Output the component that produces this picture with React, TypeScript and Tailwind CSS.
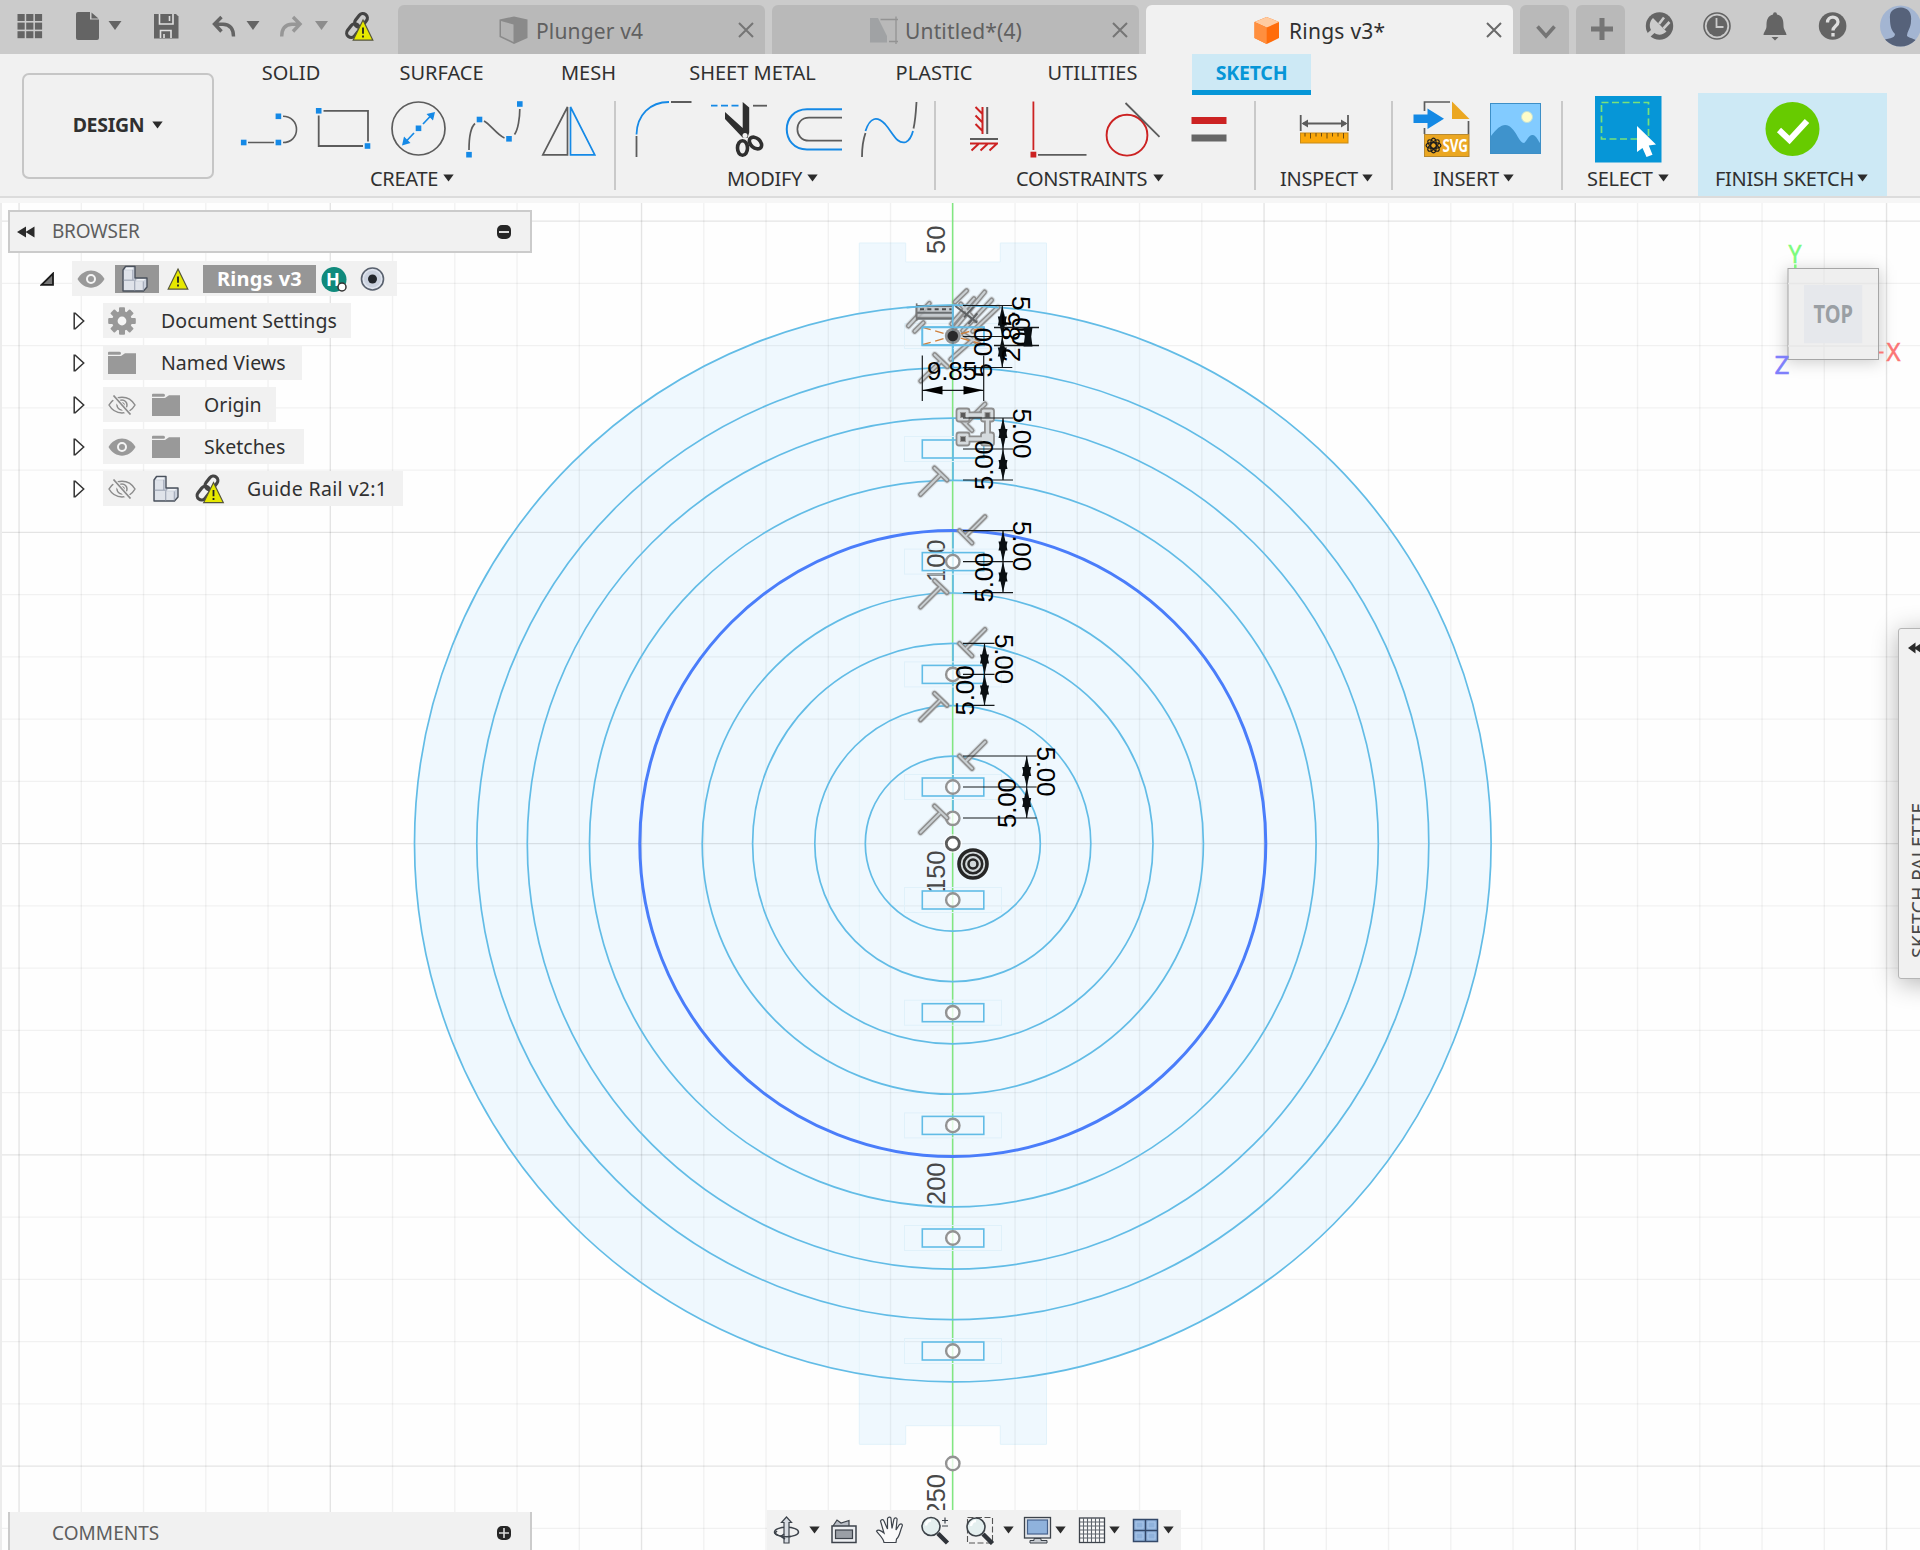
import React from "react";

const G = "#5c5c5c";
const B = "#1589e6";
const R = "#cc2222";

/* Icon drawn in toolbar coordinates: x/y locate the view box, ml spaces it from its neighbour. */
function Ico({ x, y, w, h, ml = 0, children }: { x: number; y: number; w: number; h: number; ml?: number; children?: React.ReactNode }) {
  return (
    <svg className="shrink-0 block" style={{ marginLeft: ml }} width={w} height={h} viewBox={`${x} ${y} ${w} ${h}`} fill="none">
      {children}
    </svg>
  );
}

const Sq = ({ x, y }: { x: number; y: number }) => <rect x={x - 2.8} y={y - 2.8} width={5.6} height={5.6} fill={B} />;

function Caret({ className = "" }: { className?: string }) {
  return (
    <svg className={"shrink-0 " + className} width="11" height="8" viewBox="0 0 11 8">
      <path d="M0.3 0.5H10.7L5.5 7.6Z" fill="#2c2c2c" />
    </svg>
  );
}

function Warn({ x, y }: { x: number; y: number }) {
  return (
    <g>
      <path d={`M${x} ${y - 10.5}L${x + 9.8} ${y + 9.6}H${x - 9.8}Z`} fill="#e6e800" stroke="#55553a" strokeWidth="1.2" />
      <path d={`M${x} ${y - 3}V${y + 3.2}M${x} ${y + 5}V${y + 7}`} stroke="#222" strokeWidth="1.8" />
    </g>
  );
}

function Link({ x, y }: { x: number; y: number }) {
  return (
    <g>
      <g transform={`translate(${x} ${y}) rotate(-52)`} stroke="#444" strokeWidth="3.2">
        <rect x="-14" y="-4.5" width="15" height="9" rx="4.5" />
        <rect x="-1" y="-4.5" width="15" height="9" rx="4.5" />
      </g>
      <Warn x={x + 6} y={y + 5} />
    </g>
  );
}

function Group({ w, label, pl, labelPl, gap = "gap-[5px]", children, line = true }: { w: number; label: string; pl: number; labelPl: number; gap?: string; children: React.ReactNode; line?: boolean }) {
  return (
    <div className="relative flex h-full shrink-0 flex-col" style={{ width: w }}>
      <div className="flex h-[70px] shrink-0" style={{ paddingLeft: pl }}>{children}</div>
      <div className={"flex h-7 items-center whitespace-nowrap text-[20px] leading-7 tracking-[-0.3px] text-[#303030] " + gap} style={{ paddingLeft: labelPl }}>
        <span>{label}</span>
        <Caret className="mb-[2px]" />
      </div>
      {line && <div className="absolute right-0 top-[6px] h-[89px] w-[2px] bg-[#c9c9c9]" />}
    </div>
  );
}

function Close({ dark = false }: { dark?: boolean }) {
  return (
    <svg width="16" height="16" viewBox="0 0 16 16" className="shrink-0">
      <path d="M1 1L15 15M15 1L1 15" stroke={dark ? "#6a6a6a" : "#757575"} strokeWidth="2" />
    </svg>
  );
}

function TopBar() {
  const d = "#646464";
  return (
    <div className="flex h-[54px] w-full bg-[#cbcbcb]">
      <div className="flex w-[398px] shrink-0">
        <Ico x={17} y={0} w={26} h={54} ml={17}>
          {[0, 1, 2].map((r) => [0, 1, 2].map((c) => <rect key={r + "-" + c} x={17.5 + c * 8.7} y={14 + r * 8.6} width={7.2} height={7} fill={d} />))}
        </Ico>
        <Ico x={75} y={0} w={47} h={54} ml={32}>
          <path d="M76 14q0-2 2-2H90V19.500H99V38q0 2-2 2H78q-2 0-2-2Z" fill={d} />
          <path d="M91.500 12.500L98.500 18.500H91.500Z" fill={d} />
          <path d="M108.500 21H121.500L115 30Z" fill={d} />
        </Ico>
        <Ico x={153} y={0} w={26} h={54} ml={31}>
          <path d="M154 14H176L178.500 16.500V38.500H154Z" fill={d} />
          <path d="M159.500 14V24H173V14M169.500 16V21M160.500 38V30.500H171V38M164 34V38" stroke="#e0e0e0" strokeWidth="1.6" />
        </Ico>
        <Ico x={211} y={0} w={50} h={54} ml={32}>
          <path d="M221.500 17L214.500 24L221.500 31.500M215 24.200H223C230.500 24.500 233.500 29 233.500 36.500" stroke={d} strokeWidth="3.4" />
          <path d="M246.500 21H259.500L253 30Z" fill={d} />
        </Ico>
        <Ico x={279} y={0} w={50} h={54} ml={18}>
          <path d="M293 17L300 24L293 31.500M299.500 24.200H292C284.500 24.500 281.700 29 281.700 36.500" stroke="#979797" strokeWidth="3.4" />
          <path d="M315 21H328L321.500 30Z" fill="#8d8d8d" />
        </Ico>
        <Ico x={342} y={0} w={36} h={54} ml={12}>
          <Link x={358} y={25.500} />
        </Ico>
      </div>
      <div className="flex items-end gap-[7px] pt-[5px] text-[21px] tracking-[0.150px] text-[#606060]">
        <div className="flex h-[49px] w-[367px] items-center rounded-t-[6px] bg-[#b9b9b9] pl-[101px] pr-[11px]">
          <Ico x={499} y={17} w={29} h={28}>
            <path d="M499.500 20.500L514 17.500L527.500 20.500V39L514 45L499.500 38Z" fill="#8a8a8a" />
            <path d="M501 22L513.500 25.500V43L501 37Z" fill="#b2b2b2" />
          </Ico>
          <span className="ml-[8px] grow pt-[4px]">Plunger v4</span>
          <Close />
        </div>
        <div className="flex h-[49px] w-[367px] items-center rounded-t-[6px] bg-[#b9b9b9] pl-[97px] pr-[11px]">
          <Ico x={869} y={17} w={30} h={28}>
            <path d="M870 19H878L887 37V43.500H870Z" fill="#a0a2a4" />
            <path d="M880.500 20.500H898M896 17.500V45M889 42.500H898" stroke="#939393" strokeWidth="1.300" />
          </Ico>
          <span className="ml-[6px] grow pt-[4px]">Untitled*(4)</span>
          <Close />
        </div>
        <div className="flex h-[49px] w-[367px] items-center rounded-t-[6px] bg-[#f1f1f1] pl-[107px] pr-[11px] text-[#303030]">
          <Ico x={1253} y={17} w={28} h={28}>
            <path d="M1254.500 23L1266.700 18L1279 23V39L1266.700 45L1254.500 39Z" fill="#ff6c0a" />
            <path d="M1254.500 23L1266.700 18L1279 23L1266.700 28.500Z" fill="#ffcba0" />
            <path d="M1254.500 23L1266.700 28.500V45L1254.500 39Z" fill="#ff8f3e" />
          </Ico>
          <span className="ml-[8px] grow pt-[4px] tracking-[0.250px]">Rings v3*</span>
          <Close dark />
        </div>
        <div className="h-[49px] w-[49px] rounded-t-[6px] bg-[#b9b9b9]">
          <Ico x={1520} y={5} w={49} h={49}><path d="M1537.500 26.500L1546 36L1554.500 26.500" stroke="#757575" strokeWidth="3.600" /></Ico>
        </div>
        <div className="h-[49px] w-[49px] rounded-t-[6px] bg-[#b9b9b9]">
          <Ico x={1576} y={5} w={49} h={49}><path d="M1591 29H1613M1602 18V40" stroke="#757575" strokeWidth="5" /></Ico>
        </div>
      </div>
      <Ico x={1645} y={0} w={275} h={54} ml={20}>
        <circle cx="1659.500" cy="26" r="13.700" fill={d} />
        <path d="M1653 18L1666.500 31.500C1663.500 34.500 1658.500 36 1654.500 33L1649.500 37.500L1646.500 34L1651 30C1649 26 1649.500 21.500 1653 18Z" fill="#cbcbcb" />
        <path d="M1659 24L1664 17.500M1663.500 28.500L1669.500 22" stroke="#cbcbcb" strokeWidth="2.600" />
        <circle cx="1717" cy="26" r="13" stroke={d} strokeWidth="1.600" />
        <circle cx="1717" cy="26" r="10.400" fill={d} />
        <path d="M1716.500 18V27H1723.500" stroke="#cbcbcb" strokeWidth="1.800" />
        <path d="M1773 14.500q0-2.300 2-2.300t2 2.300C1783 16 1783.500 21 1783.500 26C1783.500 30 1786.500 32 1786.500 35H1763.500C1763.500 32 1766.500 30 1766.500 26C1766.500 21 1767 16 1773 14.500ZM1771.500 37H1778.500L1775 40.500Z" fill={d} />
        <circle cx="1832.600" cy="26" r="13.800" fill={d} />
        <path d="M1827.500 22.500C1827.500 15.500 1838 15.500 1838 22C1838 26 1833 26 1833 30.500M1833 33V36.500" stroke="#dedede" strokeWidth="3.300" />
        <clipPath id="avatar"><circle cx="1900.500" cy="26" r="20.500" /></clipPath>
        <g clipPath="url(#avatar)">
          <rect x="1879" y="5" width="42" height="42" fill="#a3b5d2" />
          <path d="M1890 19C1889 11 1894 8 1901 7.500C1908 8 1912 12 1911 21C1911 28 1907 31 1907 36C1911 39 1917 39 1921 44V48H1880V41C1888 38 1895 39 1895 34C1892 31 1890 27 1890 19Z" fill="#56627a" />
        </g>
      </Ico>
    </div>
  );
}

function RibbonTab({ w, children }: { w: number; children: string }) {
  return <div className="h-full shrink-0 whitespace-nowrap pt-[5px] text-center text-[20px] leading-7 text-[#303030]" style={{ width: w }}>{children}</div>;
}

function Ribbon() {
  const Y = 95;
  const H = 69;
  return (
    <div className="flex h-[144px] w-full border-b-2 border-[#dcdcdc] bg-[#f1f1f1]">
      <div className="w-[232px] shrink-0 pl-[22px] pt-[19px]">
        <div className="flex h-[106px] w-[192px] items-center justify-center gap-[8px] rounded-[7px] border-2 border-[#c6c6c6] pb-[2px] text-[19.500px] font-bold tracking-[-0.300px] text-[#303030]">
          <span>DESIGN</span>
          <Caret />
        </div>
      </div>
      <div className="flex grow flex-col">
        <div className="flex h-[39px] shrink-0">
          <RibbonTab w={118}>SOLID</RibbonTab>
          <RibbonTab w={183}>SURFACE</RibbonTab>
          <RibbonTab w={111}>MESH</RibbonTab>
          <RibbonTab w={217}>SHEET METAL</RibbonTab>
          <RibbonTab w={146}>PLASTIC</RibbonTab>
          <RibbonTab w={171}>UTILITIES</RibbonTab>
          <div className="ml-[14px] h-[41px] w-[119px] shrink-0 border-b-[5px] border-[#0696d7] bg-[#cde9f5] pt-[5px] text-center text-[19.500px] font-bold leading-7 tracking-[-0.200px] text-[#0696d7]">SKETCH</div>
        </div>
        <div className="flex h-[103px]">
          <div className="flex pt-[2px]">
            <Group w={384} pl={8} labelPl={138} label="CREATE">
              <Ico x={240} y={Y} w={60} h={H}>
                <path d="M248 142.500H274M283 116.300C291 116.300 296.500 122 296.500 129.500S291 142.500 283 142.500" stroke={G} strokeWidth="1.600" />
                <Sq x={243.700} y={142.500} /><Sq x={278.400} y={142.500} /><Sq x={278.400} y={116.300} />
              </Ico>
              <Ico x={314} y={Y} w={58} h={H} ml={14}>
                <path d="M323.500 110.800H368V141.500M363 146H318.700V115.500" stroke={G} strokeWidth="1.800" />
                <Sq x={318.700} y={110.800} /><Sq x={367.500} y={146} />
              </Ico>
              <Ico x={390} y={Y} w={57} h={H} ml={18}>
                <circle cx="418.500" cy="128.500" r="26.500" stroke={G} strokeWidth="1.700" />
                <path d="M405 142.500L414 133M423 124L432 114.500" stroke={B} strokeWidth="1.700" />
                <path d="M435 112L433 120.500L426.500 114ZM402 145.500L404 136.500L410.500 143Z" fill={B} />
                <Sq x={418.500} y={128.300} />
              </Ico>
              <Ico x={464} y={Y} w={60} h={H} ml={17}>
                <path d="M469 150C469 138 471 127 475 123.500M484 121C490 124 497 135 504.500 138M514.500 134.500C518 130 519.800 118 519.800 109" stroke={G} strokeWidth="1.700" />
                <Sq x={469} y={154.700} /><Sq x={479.500} y={119.500} /><Sq x={509} y={138.800} /><Sq x={519.800} y={104} />
              </Ico>
              <Ico x={541} y={Y} w={56} h={H} ml={17}>
                <path d="M567.500 107V154.800H542.800Z" stroke={G} strokeWidth="1.700" />
                <path d="M570.500 107V154.800H594.800Z" stroke={B} strokeWidth="1.700" />
              </Ico>
            </Group>
            <Group w={320} pl={18} labelPl={111} label="MODIFY">
              <Ico x={634} y={Y} w={60} h={H}>
                <path d="M636.500 134.500C637 115 650 102 669 102" stroke={B} strokeWidth="1.800" />
                <path d="M671 102H691.500M636.500 136V157" stroke={G} strokeWidth="1.800" />
              </Ico>
              <Ico x={708} y={Y} w={62} h={H} ml={14}>
                <path d="M711 105.700H717.500M721 105.700H728M731.500 105.700H738.500" stroke={B} strokeWidth="1.800" />
                <path d="M753 105.700H767" stroke={G} strokeWidth="1.800" />
                <path d="M742.700 102L749.200 107.500V132.500L747.500 138L742.500 137.500L725 119V112L742.700 128Z" fill="#2f2f2f" />
                <circle cx="745" cy="135.500" r="2.500" fill="#f1f1f1" />
                <ellipse cx="742.500" cy="148" rx="5" ry="7.300" stroke="#2f2f2f" strokeWidth="3.600" />
                <ellipse cx="755.500" cy="143" rx="4.800" ry="7" transform="rotate(-48 755.500 143)" stroke="#2f2f2f" strokeWidth="3.600" />
              </Ico>
              <Ico x={785} y={Y} w={58} h={H} ml={15}>
                <path d="M842 109.200H807C780 109.200 780 149.500 807 149.500H842" stroke={B} strokeWidth="2" />
                <path d="M842 117.700H809C793.500 117.700 793.500 140.700 809 140.700H842" stroke={G} strokeWidth="1.700" />
              </Ico>
              <Ico x={860} y={Y} w={60} h={H} ml={17}>
                <path d="M862 157C862 147 863 140 865.500 133M913.500 128.500C915.500 120 916 110 916.500 102" stroke={G} strokeWidth="1.800" />
                <path d="M865.500 131C870 117 877 116 885 124C893 133 897 145 906 142C910 140 912 135 913 131" stroke={B} strokeWidth="1.800" />
              </Ico>
            </Group>
            <Group w={320} pl={32} labelPl={80} label="CONSTRAINTS" gap="gap-[6px]">
              <Ico x={968} y={Y} w={32} h={H}>
                <path d="M982.500 107V134M975.500 107L982 113.500M975.500 115.500L982 122M975.500 124L982 130.500M970 143.500H998M978.500 144L971.500 150.500M987.500 144L980.500 150.500M996.500 144L989.500 150.500" stroke={R} strokeWidth="2" />
                <path d="M987.200 107V134M970 139H998" stroke={G} strokeWidth="2" />
              </Ico>
              <Ico x={1028} y={Y} w={60} h={H} ml={28}>
                <path d="M1033.400 101.500V150" stroke={R} strokeWidth="1.800" />
                <rect x="1030.500" y="151.700" width="5.800" height="5.800" fill={R} />
                <path d="M1038 154.800H1086.500" stroke={G} strokeWidth="1.700" />
              </Ico>
              <Ico x={1104} y={Y} w={58} h={H} ml={16}>
                <circle cx="1127" cy="135.200" r="20.400" stroke={R} strokeWidth="1.900" />
                <path d="M1125.500 103L1159.500 136.800" stroke={G} strokeWidth="1.800" />
              </Ico>
              <Ico x={1190} y={Y} w={38} h={H} ml={28}>
                <rect x="1191.500" y="117" width="35" height="7" fill={R} />
                <rect x="1191.500" y="134.500" width="35" height="7" fill="#666" />
              </Ico>
            </Group>
            <Group w={137} pl={43} labelPl={24} label="INSPECT" gap="gap-[4px]">
              <Ico x={1299} y={Y} w={52} h={H}>
                <path d="M1300.700 115V131M1348 115V131M1303 123.500H1346" stroke={G} strokeWidth="1.800" />
                <path d="M1301.500 123.500L1308 119.500V127.500ZM1347.500 123.500L1341 119.500V127.500Z" fill={G} />
                <rect x="1300.500" y="133" width="47.500" height="10" fill="#faa70a" stroke="#c78a18" />
                {[0, 1, 2, 3, 4, 5, 6, 7].map((i) => <path key={i} d={`M${1305 + i * 5.5} 133V${i % 3 === 1 ? 138.5 : 136.5}`} stroke="#6b4a10" strokeWidth="1" />)}
              </Ico>
            </Group>
            <Group w={170} pl={19} labelPl={40} label="INSERT" gap="gap-[4px]">
              <Ico x={1412} y={Y} w={60} h={H}>
                <path d="M1424.500 111V102H1450M1424.500 128V134M1468.500 121V134" stroke={G} strokeWidth="1.700" />
                <path d="M1452 101.500L1469.500 119H1452Z" fill="#eba722" />
                <path d="M1413.500 114.500H1427.500V108.500L1444 118.700L1427.500 129V123H1413.500Z" fill="#1489e4" />
                <rect x="1424.500" y="134.500" width="44.500" height="22" fill="#eba722" stroke="#b98a30" />
                <g stroke="#1c1c1c" strokeWidth="1.200">
                  {[0, 45, 90, 135].map((a) => <ellipse key={a} cx="1433.500" cy="145.500" rx="7.400" ry="2.800" transform={`rotate(${a} 1433.500 145.500)`} />)}
                </g>
                <text x="1442.500" y="152" fontSize="17" fontWeight="700" fill="#fff" textLength="25.500" lengthAdjust="spacingAndGlyphs" fontFamily="Noto Sans">SVG</text>
              </Ico>
              <Ico x={1489} y={Y} w={54} h={H} ml={17}>
                <rect x="1490.500" y="103.500" width="50" height="50" fill="#82cbff" stroke="#3d8fc7" />
                <path d="M1491 136C1498 127 1503 123 1509 126C1517 131 1519 143 1524 143C1527 141 1529 134 1533 135C1537 136 1538 141 1540 143V153H1491Z" fill="#3f93cc" />
                <circle cx="1527" cy="117" r="5.500" fill="#fffdc9" stroke="#bfe0d8" />
              </Ico>
            </Group>
            <Group w={135} pl={32} labelPl={24} label="SELECT" line={false}>
              <Ico x={1595} y={Y} w={67} h={H}>
                <rect x="1595" y="96" width="66.500" height="66.500" fill="#0696d7" />
                <rect x="1601.500" y="102.500" width="47" height="36.500" stroke="#79e27a" strokeWidth="1.700" strokeDasharray="7 3.500" />
                <path d="M1637 126L1656 144.500L1648.800 145.500L1652.500 154.800L1646.500 157L1642.500 148L1637 152Z" fill="#fff" />
              </Ico>
            </Group>
          </div>
          <div className="flex h-[103px] w-[189px] flex-col bg-[#cde9f5] pt-[2px]">
            <Group w={189} pl={66} labelPl={17} label="FINISH SKETCH" gap="gap-[3px]" line={false}>
              <Ico x={1764} y={Y} w={58} h={H}>
                <circle cx="1792.500" cy="129" r="27" fill="#67cb00" />
                <path d="M1779 130L1789.500 140L1807 121" stroke="#fff" strokeWidth="6" />
              </Ico>
            </Group>
          </div>
        </div>
      </div>
    </div>
  );
}

const circles = [538.3, 476, 425.5, 363.3, 250.6, 200.2, 138, 87.5];
const slots = [336, 449, 561.6, 674.4, 787, 900, 1012.7, 1125.4, 1238, 1351];

/* Grey outlined stroke used by the constraint glyphs. */
function Bars({ d, w = 1 }: { d: string; w?: number }) {
  return (
    <g strokeLinecap="round" strokeLinejoin="round" fill="none">
      <path d={d} stroke="#8e8e8e" strokeOpacity="0.25" strokeWidth={7 * w} />
      <path d={d} stroke="#8e8e8e" strokeWidth={5 * w} />
      <path d={d} stroke="#c9cfd2" strokeWidth={2 * w} />
    </g>
  );
}

function Arrow({ x, y, dir, s = 20 }: { x: number; y: number; dir: number; s?: number }) {
  return <path d={`M${x} ${y}L${x - 4.5} ${y + dir * s}L${x + 4.5} ${y + dir * s}Z`} fill="#0a0f12" />;
}

function DimPair({ c, x }: { c: number; x: number }) {
  return (
    <g>
      <path d={`M963 ${c - 31}H${x + 10}M963 ${c}H${x + 10}M963 ${c + 31}H${x + 10}M${x} ${c - 31}V${c + 31}`} stroke="#15191b" strokeWidth="1.2" />
      <Arrow x={x} y={c - 31} dir={1} /><Arrow x={x} y={c} dir={-1} /><Arrow x={x} y={c} dir={1} /><Arrow x={x} y={c + 31} dir={-1} />
      <text transform={`translate(${x + 10} ${c - 40.5}) rotate(90)`} fontSize="26" textLength="50">5.00</text>
      <text transform={`translate(${x - 10.5} ${c + 41}) rotate(-90)`} fontSize="26" textLength="50">5.00</text>
    </g>
  );
}

function Canvas() {
  const vs = Array.from({ length: 31 }, (_, i) => i - 15);
  const hs = Array.from({ length: 22 }, (_, i) => i - 10);
  const cx = 952.8;
  const cy = 843.6;
  return (
    <svg className="block" width="1920" height="1347" viewBox="0 203 1920 1347" fontFamily="Liberation Sans, Arial, sans-serif">
      <rect x="0" y="203" width="1920" height="1347" fill="#fefefe" />
      <path d="M859.300 243H905.700V262H1000.300V243H1046.500V1444.300H1000.300V1425.700H905.700V1444.300H859.300Z" fill="#eff8fe" stroke="#e2f2fa" />
      <circle cx={cx} cy={cy} r="538.300" fill="#eff8fe" />
      <path d="M859.300 300V1380M1046.500 300V1380" stroke="#e4f3fb" />
      {vs.map((i) => <path key={i} d={`M${cx + i * 62.25} 203V1550`} stroke="#000" strokeOpacity={i % 5 ? 0.05 : 0.1} strokeWidth="1.4" />)}
      {hs.map((i) => <path key={i} d={`M0 ${cy + i * 62.25}H1920`} stroke="#000" strokeOpacity={i % 5 ? 0.05 : 0.1} strokeWidth="1.4" />)}
      <g fill="#484848" fontSize="25.500" textAnchor="end">
        {[["50", 225.500], ["100", 539.500], ["150", 850.500], ["200", 1162.500], ["250", 1474]].map(([t, y]) => (
          <text key={t} transform={`translate(944.500 ${y}) rotate(-90)`}>{t}</text>
        ))}
      </g>
      <path d={`M${cx - 0.2} 203V1550`} stroke="#80e880" strokeWidth="1.500" />
      {slots.slice(0, 5).map((c, i) => <path key={c} d={`M953 ${c - 31}V${c + (i === 4 ? 24 : 31)}`} stroke="#62bce6" strokeWidth="1.700" />)}
      <g fill="none" stroke="#62bce6" strokeWidth="1.700">
        {circles.map((r) => <circle key={r} cx={cx} cy={cy} r={r} />)}
      </g>
      <circle cx={cx} cy={cy} r="313" fill="none" stroke="#4a7dfa" strokeWidth="3" />
      {slots.map((y, i) => (
        <g key={y} fill="none">
          <rect x="904.500" y={y - 12.5} width="97" height="25" stroke="#e0f1fa" />
          <rect x="922.300" y={y - 9} width="61.500" height="18" stroke="#62bce6" strokeWidth="1.600" />
          {i > 1 && <circle cx={cx} cy={y} r="6.700" fill="#fff" fillOpacity="0.750" stroke="#939393" strokeWidth="2.400" />}
        </g>
      ))}
      <circle cx={cx} cy="818.300" r="6.700" fill="#fff" fillOpacity="0.750" stroke="#939393" strokeWidth="2.400" />
      <circle cx={cx} cy="1463.500" r="6.700" fill="#fff" fillOpacity="0.750" stroke="#939393" strokeWidth="2.400" />
      <circle cx={cx} cy={cy} r="9.500" fill="#fff" fillOpacity="0.600" />
      <circle cx={cx} cy={cy} r="6.500" fill="#fff" stroke="#5c5c5c" strokeWidth="2.800" />
      <g fill="none" stroke="#262626">
        <circle cx="973" cy="864" r="14" fill="#d2d8da" strokeWidth="3.600" />
        <circle cx="973" cy="864" r="9.200" strokeWidth="2.600" />
        <circle cx="973" cy="864" r="4.500" strokeWidth="2.600" />
      </g>
      {[449, 561.6, 674.4, 787].map((c) => (
        <g key={c}>
          <Bars d={`M985 ${c - 45}L966.500 ${c - 26.5}M959.500 ${c - 31}L972 ${c - 18.5}`} />
          <Bars d={`M920.500 ${c + 45.5}L939.500 ${c + 26.5}M934.500 ${c + 19}L947 ${c + 31}`} />
        </g>
      ))}
      {/* Coincident glyph beside the second slot. */}
      <g fill="none">
        <path d="M963 415H987.500V439H963" stroke="#8e8e8e" strokeWidth="7" />
        {[[963, 415], [987.5, 415], [963, 439], [987.5, 439]].map(([x, y], i) => (
          <rect key={i} x={x - 6.5} y={y - 6.5} width="13" height="13" rx="2.500" fill="#d5dadd" stroke="#8e8e8e" strokeWidth="1.800" />
        ))}
        <path d="M963 415H987.500V439H963" stroke="#d5dadd" strokeWidth="3.400" />
        {[[963, 415], [987.5, 415], [963, 439]].map(([x, y], i) => (
          <rect key={i} x={x - 2.5} y={y - 2.5} width="5" height="5" fill="#5a5a5a" stroke="#999" />
        ))}
      </g>
      {/* Stacked parallel, perpendicular and midpoint glyphs on the first slot. */}
      <g transform="translate(840 200) scale(0.33333)">
        <Bars w={3} d="M205 378L268 310M224 394L250 368M345 306L380 272M335 372L402 296M343 385L434 276M368 392L455 300M398 394L474 322M362 312L405 362M332 478L402 416M372 404L416 430M242 543L300 487M284 464L322 500" />
        <path d="M228 318H338V352H228Z" fill="#b9bdc0" fillOpacity="0.800" stroke="#777" strokeWidth="3" />
        <path d="M230 318H338M230 338H338M230 356H338" stroke="#6b6f72" strokeWidth="6" />
        <path d="M230 310V362" stroke="#777" strokeWidth="5" />
        <path d="M240 328H335" stroke="#4c4c4c" strokeWidth="6" strokeDasharray="12 10" />
        <path d="M346 318L412 368M372 352L404 316M412 340L385 372" stroke="#5f6264" strokeWidth="6" />
        <path d="M247 382L432 434M247 434L432 382" stroke="#d0803c" strokeWidth="4" strokeDasharray="26 14" />
        <path d="M247 382H432V436H247ZM338 316V500" fill="none" stroke="#62bce6" strokeWidth="5" />
        <path d="M200 323Q338 307 476 323" fill="none" stroke="#62bce6" strokeWidth="5" />
      </g>
      <circle cx={cx} cy="336" r="8" fill="#777" fillOpacity="0.800" />
      <circle cx={cx} cy="336" r="5.300" fill="#2a2a2a" />
      <g fill="#000">
        <DimPair c={449} x={1003} />
        <DimPair c={561.6} x={1003} />
        <DimPair c={674.4} x={984.5} />
        <DimPair c={787} x={1026.7} />
        <DimPair c={336.5} x={1002.3} />
        <text transform="translate(1020 362) rotate(-90)" fontSize="26" textLength="50">2.85</text>
        <path d="M994 327.500H1039M994 345.500H1039M1028 327V346" stroke="#15191b" strokeWidth="1.300" />
        <path d="M1026 327H1030L1032.500 346.500H1023.500ZM1023.500 327H1032.500L1030 346H1026Z" fill="#0a0f12" />
        <text x="927" y="380" fontSize="26" textLength="50">9.85</text>
        <path d="M922.300 355.500V401M983.700 355.500V401M922.300 390.300H983.700" stroke="#15191b" strokeWidth="1.200" />
        <path d="M922.500 390.300L942.500 386V394.600ZM983.500 390.300L963.500 386V394.600Z" />
      </g>
    </svg>
  );
}

function TreeArrow() {
  return (
    <svg width="12" height="18" viewBox="0 0 12 18" className="shrink-0">
      <path d="M1.200 1.200V16.800L2.200 16.800L10.700 9L2.200 1.200Z" fill="#fff" stroke="#333" strokeWidth="1.500" />
    </svg>
  );
}

function Eye({ off = false }: { off?: boolean }) {
  return (
    <svg width="28" height="20" viewBox="0 0 28 20" className="shrink-0">
      {off ? (
        <g fill="none" stroke="#8c8c8c" strokeWidth="1.500">
          <path d="M1 10C7 -0.500 21 -0.500 27 10C21 20.500 7 20.500 1 10Z" />
          <circle cx="14" cy="10" r="5" />
          <circle cx="14" cy="10" r="2" />
          <path d="M4.500 0.500L21.500 19.500" stroke="#f1f1f1" strokeWidth="5" />
          <path d="M5.500 0.500L22.500 19.500" strokeWidth="1.700" />
        </g>
      ) : (
        <g>
          <path d="M0.500 10C7 -1.500 21 -1.500 27.500 10C21 21.500 7 21.500 0.500 10Z" fill="#999" />
          <circle cx="14" cy="10" r="4" fill="#999" stroke="#f4f4f4" strokeWidth="2" />
        </g>
      )}
    </svg>
  );
}

function Folder() {
  return (
    <svg width="28" height="24" viewBox="0 0 28 24" className="shrink-0">
      <path d="M0 1.700Q0 0.700 1 0.700H11.500Q13 0.700 13 2.200T11.500 3.700H0ZM0 5H13L17 2.200H28V23H0Z" fill="#999" />
    </svg>
  );
}

function Component() {
  return (
    <svg width="26" height="28" viewBox="0 0 26 28" className="shrink-0">
      <path d="M1 5L3.500 1.500H13V13H25V22L21.500 26H1Z" fill="#ccd2dd" stroke="#4a515c" strokeWidth="1.400" strokeLinejoin="round" />
      <path d="M2 5.500H10.300V14.500H2ZM2 16H12V25H2ZM13.500 16.500H20.800V25H13.500Z" fill="#dfe3ea" />
      <path d="M3 4.500L4.300 2.500H11.500L10.300 4.500ZM14 15.500L15.500 14H23.500L21.500 15.500Z" fill="#f3f5f8" />
      <path d="M10.800 5V15M12.700 25.500V16.500L13.500 14M21.300 16.500V25.500M1.500 15.200H12.500" fill="none" stroke="#9aa2b0" strokeWidth="0.900" />
    </svg>
  );
}

function Gear() {
  return (
    <svg width="28" height="28" viewBox="0 0 28 28" className="shrink-0">
      <g fill="#999">
        {[0, 45, 90, 135].map((a) => <rect key={a} x="11" y="0.200" width="6" height="27.600" rx="1" transform={`rotate(${a} 14 14)`} />)}
        <circle cx="14" cy="14" r="10" />
      </g>
      <circle cx="14" cy="14" r="4.400" fill="#f6f6f6" />
    </svg>
  );
}

function Row({ w, children }: { w: number; children: React.ReactNode }) {
  return (
    <div className="flex h-[35px] items-center pl-[73px]">
      <TreeArrow />
      <div className="ml-[18px] flex h-[35px] items-center whitespace-nowrap bg-[#f1f1f1] pl-[5px] text-[19.500px] tracking-[0.050px] text-[#303030]" style={{ width: w }}>
        {children}
      </div>
    </div>
  );
}

function Browser() {
  return (
    <div className="absolute left-0 top-[7px] w-[534px]">
      <div className="ml-[8px] flex h-[43px] w-[524px] items-center border-2 border-[#cbcbcb] bg-[#f1f1f1] pl-[7px]">
        <svg width="18" height="12" viewBox="0 0 18 12"><path d="M0 6L9 0.500V11.500ZM8.500 6L17.500 0.500V11.500Z" fill="#2a2a2a" /></svg>
        <span className="ml-[17px] grow text-[19px] tracking-[-0.250px] text-[#5e5e5e]">BROWSER</span>
        <svg width="16" height="16" viewBox="0 0 16 16" className="mr-[18px]"><rect x="1" y="1" width="14" height="14" rx="5" fill="#262626" /><path d="M3 8H13" stroke="#ddd" strokeWidth="2" /></svg>
      </div>
      <div className="mt-[8px] flex flex-col gap-[7px]">
        <div className="flex h-[35px] items-center pl-[40px]">
          <svg width="15" height="14" viewBox="0 0 15 14"><path d="M1.500 12.800L13 1.500V12.800Z" fill="#777" stroke="#1a1a1a" strokeWidth="1.800" /></svg>
          <div className="ml-[17px] flex h-[35px] w-[325px] items-center bg-[#f1f1f1] pl-[5px]">
            <Eye />
            <div className="ml-[10px] flex h-[28px] w-[44px] items-center bg-[#969696] pl-[7px]"><Component /></div>
            <Ico x={167} y={266} w={22} h={28} ml={8}><Warn x={178} y={280.500} /></Ico>
            <div className="ml-[14px] flex h-[28px] w-[113px] items-center justify-center bg-[#969696] text-[20px] font-bold tracking-[0.300px] text-white">Rings v3</div>
            <svg width="70" height="30" viewBox="315.500 264 70 30" className="shrink-0">
              <circle cx="333.500" cy="279.500" r="12.500" fill="#108a7c" />
              <text x="332.500" y="286" textAnchor="middle" fontSize="18" fontWeight="700" fill="#fff" fontFamily="Noto Sans">H</text>
              <circle cx="341.500" cy="287" r="4" fill="#fff" stroke="#333" strokeWidth="1.500" />
              <circle cx="372" cy="279" r="11" fill="#dfe4ee" stroke="#59616e" strokeWidth="1.600" />
              <circle cx="372" cy="279" r="8.500" fill="#cbd2df" />
              <circle cx="372" cy="279" r="4.500" fill="#22262c" />
            </svg>
          </div>
        </div>
        <Row w={248}><Gear /><span className="ml-[25px]">Document Settings</span></Row>
        <Row w={199}><Folder /><span className="ml-[25px]">Named Views</span></Row>
        <Row w={173}><Eye off /><span className="w-[16px]" /><Folder /><span className="ml-[24px]">Origin</span></Row>
        <Row w={201}><Eye /><span className="w-[16px]" /><Folder /><span className="ml-[24px]">Sketches</span></Row>
        <Row w={300}>
          <Eye off /><span className="w-[17px]" /><Component />
          <Ico x={192} y={472} w={34} h={35} ml={13}><Link x={207.500} y={489} /></Ico>
          <span className="ml-[21px] tracking-[0.350px]">Guide Rail v2:1</span>
        </Row>
      </div>
    </div>
  );
}

function ViewCube() {
  return (
    <svg className="absolute left-[1760px] top-[27px]" width="160" height="160" viewBox="1760 230 160 160" fontFamily="Noto Sans">
      <defs><filter id="soft" x="-30%" y="-30%" width="160%" height="160%"><feGaussianBlur stdDeviation="8" /></filter></defs>
      <rect x="1786" y="270" width="94" height="92" fill="#000" fillOpacity="0.200" filter="url(#soft)" />
      <rect x="1788" y="268.500" width="90.500" height="91" fill="#efefef" stroke="#a6a6a6" />
      <path d="M1788 283.500H1878M1788 346H1878M1824 269V359" stroke="#e7e7e7" strokeWidth="1.300" />
      <rect x="1804" y="285" width="58.300" height="58.300" fill="#e6e8ec" />
      <text x="1813.500" y="323.300" fontSize="25.500" fontWeight="700" fill="#9a9fa4" textLength="39.500" lengthAdjust="spacingAndGlyphs">TOP</text>
      <g fontSize="26" strokeWidth="0.500">
        <text x="1788.500" y="262.500" fill="#7cfb7c" stroke="#7cfb7c" textLength="13" lengthAdjust="spacingAndGlyphs">Y</text>
        <text x="1774.500" y="374" fill="#7f7ffb" stroke="#7f7ffb" textLength="15" lengthAdjust="spacingAndGlyphs">Z</text>
        <text x="1886.500" y="361" fill="#fb7575" stroke="#fb7575" textLength="14" lengthAdjust="spacingAndGlyphs">X</text>
      </g>
      <path d="M1795.300 264.500V268" stroke="#7cfb7c" strokeWidth="2.500" />
      <path d="M1879 352.500H1883.500" stroke="#fb7575" strokeWidth="2" />
    </svg>
  );
}

function Palette() {
  return (
    <div className="absolute left-[1898px] top-[425px] h-[351px] w-[60px] rounded-[3px] border border-[#b5b5b5] bg-[#f1f1f1] shadow-[0_4px_26px_rgba(0,0,0,0.3)]">
      <svg width="58" height="349" viewBox="1899 629 58 349">
        <path d="M1908 648L1915.500 642.500V653.500ZM1914 648L1922 642.500V653.500Z" fill="#2a2a2a" />
        <text transform="translate(1926 958) rotate(-90)" fontSize="19.500" fill="#484848" textLength="155" fontFamily="Noto Sans">SKETCH PALETTE</text>
      </svg>
    </div>
  );
}

function Comments() {
  return (
    <div className="absolute left-[8px] top-[1309px] flex h-[42px] w-[524px] items-center border-x-2 border-[#cbcbcb] bg-[#f1f1f1]">
      <span className="ml-[42px] grow text-[19px] tracking-[0.050px] text-[#5e5e5e]">COMMENTS</span>
      <svg width="16" height="16" viewBox="0 0 16 16" className="mr-[18px]"><rect x="1" y="1" width="14" height="14" rx="5" fill="#262626" /><path d="M3 8H13M8 3V13" stroke="#ddd" strokeWidth="1.600" /></svg>
    </div>
  );
}

function Lens({ x, y }: { x: number; y: number }) {
  return (
    <g>
      <path d={`M${x + 7} ${y + 7}L${x + 16.5} ${y + 16.5}`} stroke="#30343a" strokeWidth="4.500" />
      <circle cx={x} cy={y} r="9" fill="#e4efef" stroke="#3c4248" strokeWidth="1.600" />
      <path d={`M${x - 5} ${y - 1}A5.500 5.500 0 0 1 ${x} ${y - 6}`} stroke="#fff" strokeWidth="2.500" />
    </g>
  );
}

function NavBar() {
  const K = "#3d434b";
  return (
    <div className="absolute left-[767px] top-[1307px] flex h-[40px] w-[414px] items-center bg-[#f1f1f1] pl-[6px]">
      <Ico x={773} y={1515} w={28} h={30}>
        <ellipse cx="786.500" cy="1532" rx="12" ry="4.800" stroke={K} strokeWidth="1.500" />
        <path d="M784 1543V1522.500H781.500L786.500 1517L791.500 1522.500H789V1543Z" fill="#d9dde3" stroke={K} strokeWidth="1.200" />
        <path d="M774.500 1532C776 1536 784 1537 791 1536.500M777 1531L774.500 1533.500M784 1534L781 1536.500L785 1539" stroke={K} strokeWidth="1.500" />
      </Ico>
      <Caret className="ml-[8px]" />
      <Ico x={830} y={1515} w={28} h={30} ml={10}>
        <path d="M833 1526L837 1520L841 1523L849 1520.500V1526" fill="#b9bec6" stroke={K} strokeWidth="1.200" />
        <rect x="832" y="1526" width="24" height="16.500" fill="#eceef1" stroke={K} strokeWidth="1.500" />
        <rect x="835.500" y="1530" width="17" height="8.500" fill="#9a9fa6" stroke={K} strokeWidth="1.200" />
      </Ico>
      <Ico x={875} y={1515} w={30} h={30} ml={17}>
        <path d="M884 1542.500C883 1537 878 1534 876.500 1531C878 1529 881 1530.500 884 1533L880.500 1521C881.500 1519 883.500 1519.500 884 1521L887.500 1529L887.500 1518.500C888.500 1516.500 891 1517 891 1518.500L892 1528.500L894 1519C895.500 1517 897.500 1518 897 1520L896 1530L899.500 1524.500C901.500 1523 903 1524.500 902 1526.500C900 1531 899.500 1537 896.500 1539L896 1542.500Z" fill="#fafafa" stroke={K} strokeWidth="1.200" />
      </Ico>
      <Ico x={920} y={1515} w={30} h={30} ml={15}>
        <Lens x={931} y={1526.500} />
        <path d="M942 1520.500H948M945 1517.500V1523.500M942 1526H948" stroke={K} strokeWidth="1.200" />
      </Ico>
      <Ico x={966} y={1515} w={30} h={30} ml={16}>
        <rect x="967.500" y="1517.500" width="25" height="25.500" stroke="#555" strokeWidth="1.100" strokeDasharray="6 2.500" />
        <Lens x={976} y={1527} />
      </Ico>
      <Caret className="ml-[7px]" />
      <Ico x={1023} y={1515} w={30} h={30} ml={9}>
        <rect x="1024.500" y="1517.500" width="26" height="20.500" fill="#e3e6ea" stroke={K} strokeWidth="1.300" />
        <rect x="1027.500" y="1520" width="20" height="14" fill="#8fb2dc" stroke="#46628c" strokeWidth="1.200" />
        <path d="M1034 1538.500H1041V1540.500H1047V1543H1030V1540.500H1034Z" fill="#c7cbd1" stroke={K} strokeWidth="1" />
      </Ico>
      <Caret className="ml-[2px]" />
      <Ico x={1078} y={1515} w={28} h={30} ml={12}>
        <rect x="1079.500" y="1518" width="25" height="24.500" fill="#fbfbfb" stroke={K} strokeWidth="1.300" />
        <path d="M1083.500 1518V1542M1087.500 1518V1542M1091.500 1518V1542M1095.500 1518V1542M1099.500 1518V1542M1080 1522H1104M1080 1526H1104M1080 1530H1104M1080 1534H1104M1080 1538H1104" stroke="#5f656d" strokeWidth="1.100" />
      </Ico>
      <Caret className="ml-[3px]" />
      <Ico x={1132} y={1515} w={28} h={30} ml={12}>
        <rect x="1133.500" y="1519.500" width="24" height="22" fill="#8fb2dc" stroke="#34496a" strokeWidth="1.500" />
        <path d="M1145.500 1520V1541M1134 1530.500H1157" stroke="#34496a" strokeWidth="1.500" />
        <path d="M1136 1522H1143V1528H1136ZM1148 1522H1155V1528H1148ZM1136 1533H1143V1539H1136ZM1148 1533H1155V1539H1148Z" stroke="#a9c5e8" strokeWidth="1" />
      </Ico>
      <Caret className="ml-[3px]" />
    </div>
  );
}

export default function App() {
  return (
    <div className="flex h-[1550px] w-[1920px] flex-col overflow-hidden bg-[#f6f6f6] font-['Noto_Sans',sans-serif]">
      <TopBar />
      <Ribbon />
      <main className="relative mt-[5px] h-[1347px] w-full overflow-hidden">
        <Canvas />
        <div className="absolute left-0 top-0 h-full w-[2px] bg-[#ececec]" />
        <Browser />
        <ViewCube />
        <Palette />
        <Comments />
        <NavBar />
      </main>
    </div>
  );
}
